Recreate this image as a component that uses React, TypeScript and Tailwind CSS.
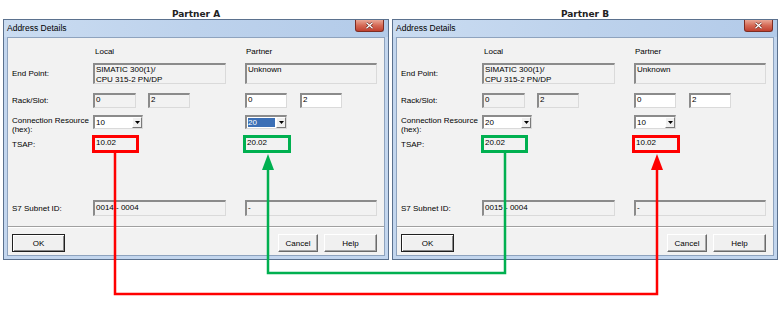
import React from "react";

// Two "Address Details" dialogs with the TSAP cross-wiring drawn over them

type Mark = "red" | "green";

interface DialogProps {
  localRes: string;
  partnerRes: string;
  partnerResSelected?: boolean;
  localTsap: string;
  partnerTsap: string;
  localMark: Mark;
  partnerMark: Mark;
  subnet: string;
}

const markBorder: Record<Mark, string> = {
  red: "border-[#ff0000]",
  green: "border-[#00b050]",
};

const sunken =
  "border-t-2 border-l-2 border-t-[#8b8b8b] border-l-[#8b8b8b] border-b border-r border-b-[#dadada] border-r-[#dadada]";

const Box: React.FC<{ className: string; white?: boolean; children?: React.ReactNode }> = ({
  className,
  white,
  children,
}) => (
  <div className={`${sunken} ${white ? "bg-white" : "bg-[#f2f2f2]"} ${className} pl-[1px] leading-[9.5px]`}>
    {children}
  </div>
);

const Combo: React.FC<{ value: string; selected?: boolean; className: string }> = ({
  value,
  selected,
  className,
}) => (
  <div className={`${sunken} bg-white flex h-[14px] ${className}`}>
    <div className="flex-1 p-px">
      <div className={selected ? "h-full bg-[#3b6fb6] text-white leading-[10px]" : "leading-[10px]"}>{value}</div>
    </div>
    <div className="w-[10px] h-full bg-[#f0f0f0] border border-white border-r-[#7a7a7a] border-b-[#7a7a7a] flex items-center justify-center">
      <svg width="5" height="3" viewBox="0 0 5 3">
        <path d="M0 0h5L2.5 3z" fill="#000" />
      </svg>
    </div>
  </div>
);

const Button: React.FC<{ label: string; className: string; isDefault?: boolean }> = ({
  label,
  className,
  isDefault,
}) => (
  <div
    className={`${className} h-[18px] flex items-center justify-center bg-[#f0f0f0] ${
      isDefault
        ? "border border-[#202020] shadow-[inset_1px_1px_0_#fff,inset_-1px_-1px_0_#8a8a8a]"
        : "border border-white border-r-[#6b6b6b] border-b-[#6b6b6b] shadow-[inset_-1px_-1px_0_#a8a8a8]"
    }`}
  >
    {label}
  </div>
);

const CloseButton = () => (
  <div className="self-start mr-[4px] w-[29px] h-[12px] rounded-b-[3px] border border-t-0 border-[#7d2c22] bg-linear-to-b from-[#e9a796] via-[#d56a56] to-[#c0402f] flex items-center justify-center">
    <svg width="9" height="7" viewBox="0 0 9 7">
      <path d="M1.5 0.8L7.5 6.2M7.5 0.8L1.5 6.2" stroke="#5b1a12" strokeWidth="2.4" />
      <path d="M1.5 0.8L7.5 6.2M7.5 0.8L1.5 6.2" stroke="#fff" strokeWidth="1.4" />
    </svg>
  </div>
);

const Row: React.FC<{ label: React.ReactNode; className: string; local: React.ReactNode; partner: React.ReactNode }> = ({
  label,
  className,
  local,
  partner,
}) => (
  <div className={`flex ${className}`}>
    <div className="w-[81px] shrink-0 flex items-center">{label}</div>
    <div className="w-[133px] shrink-0 flex gap-[12px]">{local}</div>
    <div className="w-[19px] shrink-0" />
    <div className="w-[132px] shrink-0 flex gap-[13px]">{partner}</div>
  </div>
);

const Dialog: React.FC<DialogProps> = (p) => (
  <div className="w-[386px] border border-[#5b718e] bg-[#c3d6ee]">
    <div className="h-[17px] flex items-center justify-between bg-linear-to-r from-[#cadcf1] via-[#bdd2ec] to-[#b3cbe9]">
      <span className="pl-[3px] text-[8.5px] text-black">Address Details</span>
      <CloseButton />
    </div>
    <div className="px-[3px] pb-[3px]">
      <div className="border border-[#8ea3be] bg-[#f2f2f2] pl-[4px] pr-[7px] pt-[7px] pb-[3px] text-[8px] leading-[9px] text-black">
        <Row
          className="h-[12px] items-center"
          label=""
          local={<span className="pl-[2px] self-center">Local</span>}
          partner={<span className="pl-[1px] self-center">Partner</span>}
        />
        <Row
          className="mt-[6px] h-[21px]"
          label="End Point:"
          local={
            <Box className="w-[133px] h-[21px]">
              SIMATIC 300(1)/
              <br />
              CPU 315-2 PN/DP
            </Box>
          }
          partner={<Box className="w-[132px] h-[21px]">Unknown</Box>}
        />
        <Row
          className="mt-[9px] h-[15px]"
          label="Rack/Slot:"
          local={
            <>
              <Box className="w-[43px] h-[15px]">0</Box>
              <Box className="w-[42px] h-[15px]">2</Box>
            </>
          }
          partner={
            <>
              <Box white className="w-[42px] h-[15px]">0</Box>
              <Box white className="w-[42px] h-[15px]">2</Box>
            </>
          }
        />
        <div className="flex mt-[7px] h-[20px]">
          <div className="w-[81px] shrink-0 pt-[1px]">
            Connection Resource
            <br />
            (hex):
          </div>
          <div className="w-[133px] shrink-0">
            <Combo className="w-[50px]" value={p.localRes} />
          </div>
          <div className="w-[19px] shrink-0" />
          <div className="w-[132px] shrink-0">
            <Combo className="w-[42px]" value={p.partnerRes} selected={p.partnerResSelected} />
          </div>
        </div>
        <Row
          className="h-[18px]"
          label="TSAP:"
          local={
            <div className={`ml-[-1px] w-[47px] h-[18px] border-[3px] ${markBorder[p.localMark]} pl-px leading-[9px]`}>
              {p.localTsap}
            </div>
          }
          partner={
            <div className={`ml-[-2px] w-[48px] h-[18px] border-[3px] ${markBorder[p.partnerMark]} pl-px leading-[9px]`}>
              {p.partnerTsap}
            </div>
          }
        />
        <Row
          className="mt-[47px] h-[16px]"
          label="S7 Subnet ID:"
          local={<Box className="w-[133px] h-[16px] pt-px">{p.subnet}</Box>}
          partner={<Box className="w-[132px] h-[16px] pt-px">-</Box>}
        />
        <div className="mt-[10px] ml-[-4px] mr-[-7px] border-t border-t-[#a0a0a0] border-b border-b-white" />
        <div className="mt-[6px] flex pr-[-1px]">
          <Button label="OK" isDefault className="w-[53px] ml-0" />
          <div className="flex-1" />
          <Button label="Cancel" className="w-[40px]" />
          <div className="w-[6px]" />
          <Button label="Help" className="w-[53px]" />
        </div>
      </div>
    </div>
  </div>
);

export default function App() {
  return (
    <div className="relative w-[782px] h-[317px] bg-white overflow-hidden font-['Liberation_Sans',Arial,sans-serif]">
      <div className="flex gap-[3px] pl-[3px]">
        <div className="flex flex-col">
          <div className="h-[19px] flex items-end justify-center font-['DejaVu_Sans',sans-serif] font-bold text-[9px] leading-none text-[#222]">
            Partner A
          </div>
          <Dialog
            localRes="10"
            partnerRes="20"
            partnerResSelected
            localTsap="10.02"
            partnerTsap="20.02"
            localMark="red"
            partnerMark="green"
            subnet="0014 - 0004"
          />
        </div>
        <div className="flex flex-col">
          <div className="h-[19px] flex items-end justify-center font-['DejaVu_Sans',sans-serif] font-bold text-[9px] leading-none text-[#222]">
            Partner B
          </div>
          <Dialog
            localRes="20"
            partnerRes="10"
            localTsap="20.02"
            partnerTsap="10.02"
            localMark="green"
            partnerMark="red"
            subnet="0015 - 0004"
          />
        </div>
      </div>

      {/* connection arrows drawn over both dialogs */}
      <svg className="absolute left-0 top-0 pointer-events-none" width="782" height="317" viewBox="0 0 782 317">
        <path d="M505 153V273H268V166" fill="none" stroke="#00b050" strokeWidth="2.5" />
        <path d="M268 154L262 170H274Z" fill="#00b050" />
        <path d="M115 153V294H657V166" fill="none" stroke="#ff0000" strokeWidth="2.5" />
        <path d="M657 154L651 170H663Z" fill="#ff0000" />
      </svg>
    </div>
  );
}
